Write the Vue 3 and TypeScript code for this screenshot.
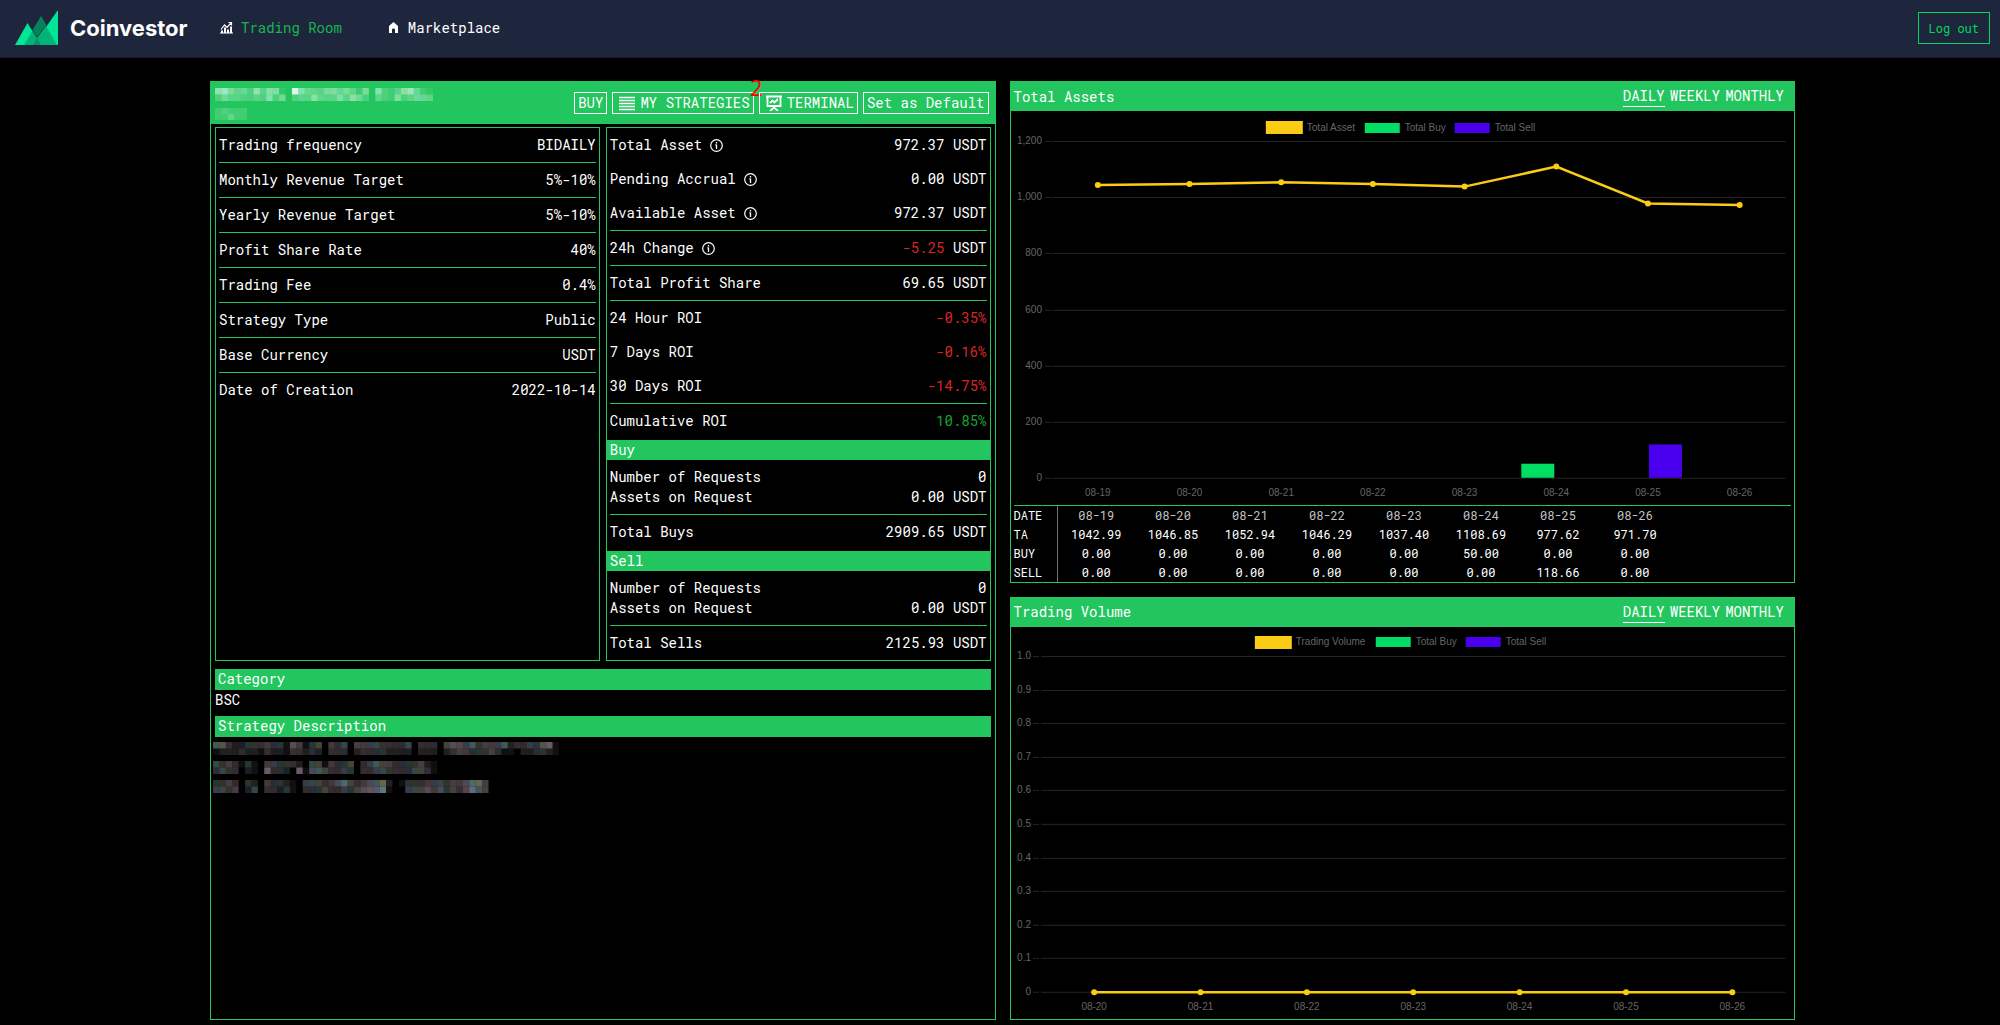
<script setup lang="ts">
import { ref } from 'vue'

interface Row {
  label: string
  value: string
  unit?: string
  info?: boolean
  tone?: 'up' | 'down'
  rule?: boolean
}

interface LegendItem {
  label: string
  color: string
  x: number
  line?: boolean
}

const periods = ['DAILY', 'WEEKLY', 'MONTHLY'] as const
const assetPeriod = ref<string>('DAILY')
const volumePeriod = ref<string>('DAILY')

const strategy: Row[] = [
  { label: 'Trading frequency', value: 'BIDAILY', rule: true },
  { label: 'Monthly Revenue Target', value: '5%-10%', rule: true },
  { label: 'Yearly Revenue Target', value: '5%-10%', rule: true },
  { label: 'Profit Share Rate', value: '40%', rule: true },
  { label: 'Trading Fee', value: '0.4%', rule: true },
  { label: 'Strategy Type', value: 'Public', rule: true },
  { label: 'Base Currency', value: 'USDT', rule: true },
  { label: 'Date of Creation', value: '2022-10-14' },
]

const performance: Row[] = [
  { label: 'Total Asset', value: '972.37', unit: 'USDT', info: true },
  { label: 'Pending Accrual', value: '0.00', unit: 'USDT', info: true },
  { label: 'Available Asset', value: '972.37', unit: 'USDT', info: true, rule: true },
  { label: '24h Change', value: '-5.25', unit: 'USDT', info: true, tone: 'down', rule: true },
  { label: 'Total Profit Share', value: '69.65', unit: 'USDT', rule: true },
  { label: '24 Hour ROI', value: '-0.35%', tone: 'down' },
  { label: '7 Days ROI', value: '-0.16%', tone: 'down' },
  { label: '30 Days ROI', value: '-14.75%', tone: 'down', rule: true },
  { label: 'Cumulative ROI', value: '10.85%', tone: 'up' },
]

const orders = [
  { title: 'Buy', requests: '0', assets: '0.00 USDT', totalLabel: 'Total Buys', total: '2909.65 USDT' },
  { title: 'Sell', requests: '0', assets: '0.00 USDT', totalLabel: 'Total Sells', total: '2125.93 USDT' },
]

const dates = ['08-19', '08-20', '08-21', '08-22', '08-23', '08-24', '08-25', '08-26']
const totals = [1042.99, 1046.85, 1052.94, 1046.29, 1037.4, 1108.69, 977.62, 971.7]
const buys = [0, 0, 0, 0, 0, 50, 0, 0]
const sells = [0, 0, 0, 0, 0, 0, 118.66, 0]
const series = [
  { name: 'TA', values: totals },
  { name: 'BUY', values: buys },
  { name: 'SELL', values: sells },
]

/* Total Assets plot area */
const A = { left: 41, right: 775, top: 30, bottom: 367, max: 1200 }
const aStep = (A.right - A.left) / dates.length
const ax = (i: number) => A.left + aStep * (i + 0.5)
const ay = (v: number) => A.bottom - (v / A.max) * (A.bottom - A.top)
const aTicks = [1200, 1000, 800, 600, 400, 200, 0]
const aLine = totals.map((v, i) => `${ax(i)},${ay(v)}`).join(' ')
const aBars = dates.flatMap((d, i) => [
  { key: d + 'b', x: ax(i) - 35, v: buys[i], color: '#00de64' },
  { key: d + 's', x: ax(i) + 1, v: sells[i], color: '#4a00ee' },
]).filter((b) => b.v > 0)
const aLegend: LegendItem[] = [
  { label: 'Total Asset', color: '#facc15', x: 255, line: true },
  { label: 'Total Buy', color: '#00de64', x: 354 },
  { label: 'Total Sell', color: '#4a00ee', x: 444 },
]

/* Trading Volume plot area */
const V = { left: 30, right: 775, top: 29, bottom: 365 }
const vDates = dates.slice(1)
const vStep = (V.right - V.left) / vDates.length
const vx = (i: number) => V.left + vStep * (i + 0.5)
const vTicks = Array.from({ length: 11 }, (_, i) => ({
  label: i === 10 ? '0' : (1 - i / 10).toFixed(1),
  y: Math.round(V.top + (i * (V.bottom - V.top)) / 10),
}))
const vLegend: LegendItem[] = [
  { label: 'Trading Volume', color: '#facc15', x: 244, line: true },
  { label: 'Total Buy', color: '#00de64', x: 365 },
  { label: 'Total Sell', color: '#4a00ee', x: 455 },
]

/* Redacted text: one digit of brightness per tile, a dot leaves the tile empty */
const nameMosaic = [
  '79645374761.c75446656426.732478521',
  '35443343735.344744464753.432634554',
]
const ownerMosaic = ['23222', '22422']
const noteMosaics = [
  [
    '55322333433154134.434.444433334.333.455453444523343561',
    '12223221322133232.333.233332222.222.234433343110223321',
  ],
  [
    '4343131.44333204414334.345443333421',
    '3433021.63320615543343.334433334431',
  ],
  [
    '3343.32.43321.44434564345562.13334443445664',
    '4434.24.33231.33343343456671.04445453435754',
  ],
]
const tiles = (rows: string[]) =>
  rows.flatMap((row, y) =>
    row.split('').flatMap((c, x) => (c === '.' ? [] : [{ x, y, level: parseInt(c, 16) }])),
  )
const lightTint = ['#ffffff', '#f0ffd8', '#dcffff']
const darkTint = ['130,175,175', '175,150,175', '140,150,185', '170,170,130', '170,140,140']
const lightFill = (t: { x: number; y: number }) => lightTint[(t.x * 2 + t.y) % 3]
const darkFill = (t: { x: number; y: number }) => `rgb(${darkTint[(t.x * 3 + t.y * 2) % 5]})`
</script>

<template>
  <div class="page">
    <header class="topbar">
      <a class="brand" href="#">
        <svg width="43" height="35" viewBox="0 0 43 35" aria-hidden="true">
          <path d="M0 35 12.500 13 18 22 22 35Z" fill="#00e696" />
          <path d="M43 0V35H32L31 17Z" fill="#00e696" />
          <path d="M9 35 17.500 21 22 28 31 16 42 35Z" fill="#00b377" />
          <path d="M26 6 31.500 15 22 27 17.500 20Z" fill="#08805a" />
          <path d="M22 28 26 35H18Z" fill="#08925f" />
        </svg>
        <span>Coinvestor</span>
      </a>
      <nav class="nav">
        <a class="nav-link active" href="#">
          <svg width="13" height="13" viewBox="0 0 13 13" aria-hidden="true">
            <path d="M1 8.500 4.500 4 7 6.500 11 2M8.500 1.500H11.500V4.500" fill="none" stroke="#fff" stroke-width="1.200" />
            <path d="M1 12V9.500H3V12ZM4 12V6.500H6V12ZM7 12V8.500H9V12ZM10 12V5.500H12V12ZM0 11.500H13V12.500H0Z" fill="#fff" />
          </svg>
          Trading Room
        </a>
        <a class="nav-link" href="#">
          <svg width="13" height="13" viewBox="0 0 13 13" aria-hidden="true">
            <path d="M6.500 1 11 5V12H8V8.500Q8 7.500 6.500 7.500T5 8.500V12H2V5Z" fill="#fff" />
          </svg>
          Marketplace
        </a>
      </nav>
      <button class="logout" type="button">Log out</button>
    </header>

    <main class="board">
      <section class="panel">
        <div class="strategy-head">
          <div class="owner">
            <svg class="name-mosaic" viewBox="0 0 34 2" preserveAspectRatio="none" aria-hidden="true">
              <rect v-for="t in tiles(nameMosaic)" :key="t.x + '-' + t.y" :x="t.x" :y="t.y" width="1" height="1" :fill="lightFill(t)" :fill-opacity="t.level / 14" />
            </svg>
            <svg class="owner-mosaic" viewBox="0 0 5 2" preserveAspectRatio="none" aria-hidden="true">
              <rect v-for="t in tiles(ownerMosaic)" :key="t.x + '-' + t.y" :x="t.x" :y="t.y" width="1" height="1" fill="#fff" :fill-opacity="t.level / 14" />
            </svg>
          </div>
          <div class="actions">
            <button class="action" type="button">BUY</button>
            <button class="action" type="button">
              <svg width="16" height="16" viewBox="0 0 16 16" aria-hidden="true">
                <path d="M0 2.500H16M0 5.500H16M0 8.500H16M0 11.500H16M0 14.500H16" stroke="#fff" stroke-width="1.400" />
              </svg>
              MY STRATEGIES
              <span class="badge">2</span>
            </button>
            <button class="action" type="button">
              <svg width="16" height="16" viewBox="0 0 16 16" fill="none" stroke="#fff" stroke-width="1.800" aria-hidden="true">
                <path d="M0 1.500H16M1.500 1.500V11H14.500V1.500M4 8 6.500 5.500 8.500 7.500 12 4M8 11V13M4 16 8 12.500 12 16" />
              </svg>
              TERMINAL
            </button>
            <button class="action" type="button">Set as Default</button>
          </div>
        </div>

        <div class="boxes">
          <div class="box">
            <div v-for="row in strategy" :key="row.label" class="row" :class="{ rule: row.rule }">
              <span>{{ row.label }}</span>
              <span>{{ row.value }}</span>
            </div>
          </div>
          <div class="box">
            <div v-for="row in performance" :key="row.label" class="row" :class="{ rule: row.rule }">
              <span class="label">
                {{ row.label }}
                <svg v-if="row.info" width="13" height="13" viewBox="0 0 13 13" aria-hidden="true">
                  <circle cx="6.500" cy="6.500" r="5.800" fill="none" stroke="#fff" stroke-width="1.200" />
                  <path d="M6.500 5.500V10M6.500 3V4.500M5.300 5.800H6.500" stroke="#fff" stroke-width="1.300" />
                </svg>
              </span>
              <span><span :class="row.tone">{{ row.value }}</span>{{ row.unit ? ' ' + row.unit : '' }}</span>
            </div>
            <template v-for="o in orders" :key="o.title">
              <h3 class="bar">{{ o.title }}</h3>
              <div class="group">
                <div class="line"><span>Number of Requests</span><span>{{ o.requests }}</span></div>
                <div class="line"><span>Assets on Request</span><span>{{ o.assets }}</span></div>
              </div>
              <div class="row"><span>{{ o.totalLabel }}</span><span>{{ o.total }}</span></div>
            </template>
          </div>
        </div>

        <div class="about">
          <h3 class="about-title">Category</h3>
          <p class="category">BSC</p>
          <h3 class="about-title">Strategy Description</h3>
          <div class="notes">
            <svg
              v-for="(m, n) in noteMosaics"
              :key="n"
              class="note"
              viewBox="0 0 54 2"
              preserveAspectRatio="none"
              aria-hidden="true"
            >
              <rect v-for="t in tiles(m)" :key="t.x + '-' + t.y" :x="t.x" :y="t.y" width="1" height="1" :fill="darkFill(t)" :fill-opacity="t.level / 10" />
            </svg>
          </div>
        </div>
      </section>

      <div class="charts">
        <section class="panel">
          <div class="chart-head">
            <h2>Total Assets</h2>
            <div class="tabs">
              <button v-for="p in periods" :key="p" type="button" :class="{ on: assetPeriod === p }" @click="assetPeriod = p">{{ p }}</button>
            </div>
          </div>
          <svg class="chart" viewBox="0 0 784 394">
            <g v-for="l in aLegend" :key="l.label">
              <rect :x="l.x" :y="l.line ? 10 : 12" :width="l.line ? 37 : 35" :height="l.line ? 13 : 10" :fill="l.color" />
              <text :x="l.x + (l.line ? 41 : 40)" y="20">{{ l.label }}</text>
            </g>
            <g v-for="t in aTicks" :key="t">
              <path class="grid" :d="`M34 ${Math.round(ay(t)) + 0.5}H40M${A.left} ${Math.round(ay(t)) + 0.5}H${A.right}`" />
              <text x="31" :y="Math.round(ay(t)) + 3" text-anchor="end">{{ t.toLocaleString('en-US') }}</text>
            </g>
            <rect v-for="b in aBars" :key="b.key" :x="b.x" :y="ay(b.v)" width="33" :height="A.bottom - ay(b.v)" :fill="b.color" />
            <polyline class="series" :points="aLine" />
            <circle v-for="(v, i) in totals" :key="i" class="dot" :cx="ax(i)" :cy="ay(v)" r="3" />
            <text v-for="(d, i) in dates" :key="d" :x="ax(i)" y="385" text-anchor="middle">{{ d }}</text>
          </svg>
          <div class="data">
            <table>
              <thead>
                <tr>
                  <th scope="row">DATE</th>
                  <th v-for="d in dates" :key="d" class="date" scope="col">{{ d }}</th>
                </tr>
              </thead>
              <tbody>
                <tr v-for="s in series" :key="s.name">
                  <th scope="row">{{ s.name }}</th>
                  <td v-for="(v, i) in s.values" :key="i">{{ v.toFixed(2) }}</td>
                </tr>
              </tbody>
            </table>
          </div>
        </section>

        <section class="panel">
          <div class="chart-head">
            <h2>Trading Volume</h2>
            <div class="tabs">
              <button v-for="p in periods" :key="p" type="button" :class="{ on: volumePeriod === p }" @click="volumePeriod = p">{{ p }}</button>
            </div>
          </div>
          <svg class="chart" viewBox="0 0 784 393">
            <g v-for="l in vLegend" :key="l.label">
              <rect :x="l.x" :y="l.line ? 9 : 10" :width="l.line ? 37 : 35" :height="l.line ? 13 : 10" :fill="l.color" />
              <text :x="l.x + (l.line ? 41 : 40)" y="18">{{ l.label }}</text>
            </g>
            <g v-for="t in vTicks" :key="t.label">
              <path class="grid" :d="`M22 ${t.y + 0.5}H28M${V.left} ${t.y + 0.5}H${V.right}`" />
              <text x="20" :y="t.y + 3" text-anchor="end">{{ t.label }}</text>
            </g>
            <path class="series" :d="`M${vx(0)} ${V.bottom + 0.5}H${vx(vDates.length - 1)}`" />
            <circle v-for="(d, i) in vDates" :key="d" class="dot" :cx="vx(i)" :cy="V.bottom + 0.5" r="3" />
            <text v-for="(d, i) in vDates" :key="d" :x="vx(i)" y="383" text-anchor="middle">{{ d }}</text>
          </svg>
        </section>
      </div>
    </main>
  </div>
</template>

<style>
body {
  margin: 0;
  background: #000;
}
</style>

<style scoped>
.page {
  color: #fff;
  font-family: 'Roboto Mono', 'DejaVu Sans Mono', monospace;
  font-size: 14px;
  line-height: 20px;
}

button {
  font: inherit;
  color: inherit;
  background: none;
  border: 0;
  padding: 0;
  cursor: pointer;
}

h2,
h3,
p {
  margin: 0;
  font-size: 14px;
  font-weight: 400;
}

.topbar {
  display: flex;
  align-items: center;
  height: 55px;
  padding: 0 10px 2px 15px;
  background: #1e263d;
  border-bottom: 1px solid #161c2c;
}

.brand {
  display: flex;
  align-items: center;
  gap: 12px;
  width: 205px;
  color: #fff;
  font-family: Inter, sans-serif;
  font-size: 22px;
  font-weight: 700;
  text-decoration: none;
}

.nav {
  display: flex;
  gap: 45px;
  flex: 1;
}

.nav-link {
  display: flex;
  align-items: center;
  gap: 8px;
  color: #fff;
  text-decoration: none;
}

.nav-link.active {
  color: #16b552;
}

.logout {
  padding: 5px 10px;
  border: 1px solid #00d65b;
  color: #00d65b;
  font-size: 12px;
}

.board {
  box-sizing: border-box;
  display: grid;
  grid-template-columns: 1fr 1fr;
  gap: 14px;
  width: 80%;
  margin: 0 auto;
  padding: 23px 5px 4px 10px;
}

.panel {
  border: 1px solid #22c55e;
  min-width: 0;
}

.charts {
  display: flex;
  flex-direction: column;
  gap: 14px;
  min-width: 0;
}

.strategy-head {
  display: flex;
  justify-content: space-between;
  align-items: flex-start;
  height: 42px;
  padding: 0 6px 0 4px;
  background: #22c55e;
}

.owner {
  display: flex;
  flex-direction: column;
  gap: 7px;
  padding-top: 6px;
}

.name-mosaic {
  width: 218px;
  height: 13px;
}

.owner-mosaic {
  width: 32px;
  height: 12px;
}

.actions {
  display: flex;
  gap: 5px;
  padding-top: 10px;
}

.action {
  position: relative;
  display: flex;
  align-items: center;
  padding: 0 3px;
  border: 1px solid #fff;
  white-space: nowrap;
}

.action svg {
  margin: 0 5px 0 3px;
}

.badge {
  position: absolute;
  top: -18px;
  right: -10px;
  color: #f00;
  font-family: 'Open Sans', sans-serif;
  font-size: 22px;
  line-height: 24px;
}

.boxes {
  display: grid;
  grid-template-columns: 1fr 1fr;
  gap: 6px;
  padding: 3px 4px 0;
}

.box {
  border: 1px solid #22c55e;
  padding: 0 3px;
}

.row,
.line {
  display: flex;
  justify-content: space-between;
}

.row {
  padding: 7px 0;
}

.rule,
.group {
  border-bottom: 1px solid #22c55e;
}

.label {
  display: flex;
  align-items: center;
  gap: 8px;
}

.up {
  color: #16a334;
}

.down {
  color: #dc2626;
}

.bar {
  margin: 2px -3px 0;
  padding: 0 3px;
  background: #22c55e;
}

.group {
  padding: 7px 0;
}

.about {
  padding: 8px 4px 0;
}

.about-title {
  padding: 0 3px;
  border-bottom: 1px solid #22c55e;
  background: #22c55e;
}

.category {
  margin-bottom: 6px;
}

.notes {
  display: flex;
  flex-direction: column;
  gap: 6px;
  margin-left: -2px;
  padding-top: 5px;
}

.note {
  width: 346px;
  height: 13px;
}

.chart-head {
  display: flex;
  justify-content: space-between;
  align-items: center;
  height: 29px;
  padding: 0 10px 0 3px;
  background: #22c55e;
}

.tabs {
  display: flex;
  gap: 5px;
}

.tabs button {
  border-bottom: 1px solid transparent;
}

.tabs .on {
  border-color: #fff;
}

.chart {
  display: block;
  width: 100%;
  height: auto;
}

.chart text {
  fill: #666;
  font-family: 'Liberation Sans', sans-serif;
  font-size: 10px;
}

.grid {
  stroke: #262626;
}

.series {
  fill: none;
  stroke: #facc15;
  stroke-width: 2.5;
}

.dot {
  fill: #facc15;
}

.data {
  margin: 0 3px;
  border-top: 1px solid #22c55e;
}

table {
  border-collapse: collapse;
  font-size: 12px;
  line-height: 19px;
}

th,
td {
  box-sizing: border-box;
  min-width: 77px;
  padding: 0;
  font-weight: 400;
  text-align: center;
}

th[scope='row'] {
  min-width: 44px;
  border-right: 1px solid #71717a;
  text-align: left;
}

.date {
  color: #c4c4c4;
}
</style>
